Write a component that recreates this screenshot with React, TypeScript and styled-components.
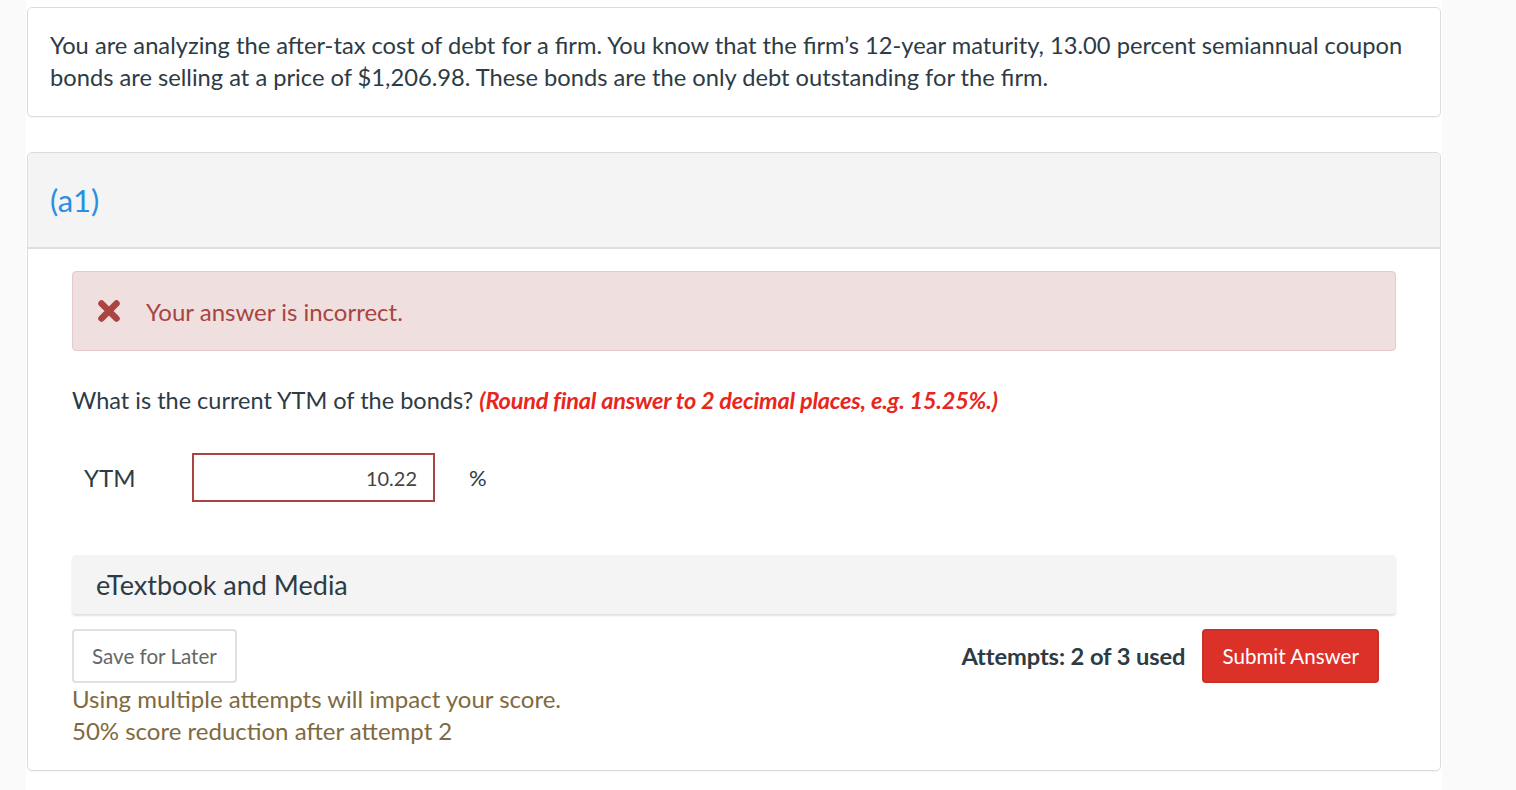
import React from "react";
import styled, { createGlobalStyle } from "styled-components";

const Global = createGlobalStyle`
  html, body { margin: 0; padding: 0; }
  body {
    background: #fafafa;
    font-family: Lato, "Noto Sans", sans-serif;
    color: #2d3b45;
  }
  * { box-sizing: border-box; }
`;

const Column = styled.main`
  margin-left: 26px;
  width: 1416px;
  min-height: 790px;
  background: #ffffff;
  padding: 7px 1px 19px 1px;
  display: flex;
  flex-direction: column;
  gap: 35px;
`;

const Card = styled.section`
  border: 1px solid #dcdcdc;
  border-radius: 5px;
  background: #fff;
  box-shadow: 0 1px 1px rgba(0, 0, 0, 0.04);
`;

const Stem = styled.p`
  margin: 0;
  padding: 21px 22px 23px 22px;
  font-size: 23.7px;
  line-height: 32px;
  color: #2d3b45;
`;

const PartHeader = styled.header`
  height: 96px;
  background: #f4f4f4;
  border-bottom: 2px solid #dedede;
  border-radius: 5px 5px 0 0;
  display: flex;
  align-items: center;
  padding: 0 22px;
  font-size: 31px;
  color: #2b8ee0;
`;

const PartBody = styled.div`
  padding: 22px 44px 23px 44px;
  display: flex;
  flex-direction: column;
`;

const Alert = styled.div`
  height: 80px;
  background: #efdfdf;
  border: 1px solid #e5c9cb;
  border-radius: 4px;
  display: flex;
  align-items: center;
  gap: 25px;
  padding: 0 24px;
  color: #a94442;
  font-size: 24px;
`;

const Prompt = styled.p`
  margin: 33px 0 0 0;
  font-size: 23.5px;
  line-height: 32px;
  color: #2d3b45;
`;

const Hint = styled.em`
  font-weight: 700;
  font-style: italic;
  color: #e8261d;
  letter-spacing: -0.2px;
`;

const AnswerRow = styled.div`
  margin-top: 37px;
  display: flex;
  align-items: center;
  padding-left: 12px;
`;

const Label = styled.span`
  width: 108px;
  font-size: 24px;
  color: #2d3b45;
`;

const Input = styled.div`
  width: 243px;
  height: 49px;
  border: 2px solid #a94442;
  display: flex;
  align-items: center;
  justify-content: flex-end;
  padding-right: 16px;
  font-size: 20px;
  color: #444;
`;

const Unit = styled.span`
  margin-left: 34px;
  font-size: 22px;
  color: #2d3b45;
`;

const MediaBar = styled.div`
  margin-top: 53px;
  height: 59px;
  background: #f4f4f4;
  border-radius: 4px;
  box-shadow: 0 2px 2px rgba(0, 0, 0, 0.12);
  display: flex;
  align-items: center;
  padding: 0 24px;
  font-size: 27px;
  color: #2d3b45;
`;

const Footer = styled.div`
  margin-top: 15px;
  display: flex;
  justify-content: space-between;
  align-items: flex-start;
  padding-right: 17px;
`;

const LeftCol = styled.div`
  display: flex;
  flex-direction: column;
  align-items: flex-start;
`;

const Button = styled.button<{ $primary?: boolean }>`
  height: 54px;
  padding: 0 18px;
  border-radius: 4px;
  font-family: Lato, "Noto Sans", sans-serif;
  font-size: 20.6px;
  cursor: pointer;
  border: 2px solid ${(p) => (p.$primary ? "#c9302a" : "#e0e0e0")};
  background: ${(p) => (p.$primary ? "#dc3129" : "#fff")};
  color: ${(p) => (p.$primary ? "#fff" : "#666")};
`;

const Notice = styled.p`
  margin: 0;
  font-size: 24px;
  line-height: 32px;
  color: #7f6a40;
`;

const RightGroup = styled.div`
  display: flex;
  align-items: center;
  gap: 17px;
`;

const Attempts = styled.span`
  font-size: 23.7px;
  font-weight: 700;
  letter-spacing: -0.1px;
  color: #2d3b45;
`;

const XIcon = () => (
  <svg width="24" height="24" viewBox="0 0 24 24" aria-hidden="true">
    <path
      d="M4.5 4.5 L19.5 19.5 M19.5 4.5 L4.5 19.5"
      stroke="#a94442"
      strokeWidth="6.5"
      strokeLinecap="round"
      fill="none"
    />
  </svg>
);

export default function App() {
  return (
    <>
      <Global />
      <Column>
        <Card>
          <Stem>
            You are analyzing the after-tax cost of debt for a firm. You know that the firm’s 12-year
            maturity, 13.00 percent semiannual coupon bonds are selling at a price of $1,206.98. These
            bonds are the only debt outstanding for the firm.
          </Stem>
        </Card>
        <Card>
          <PartHeader>(a1)</PartHeader>
          <PartBody>
            <Alert>
              <XIcon />
              <span>Your answer is incorrect.</span>
            </Alert>
            <Prompt>
              What is the current YTM of the bonds?{" "}
              <Hint>(Round final answer to 2 decimal places, e.g. 15.25%.)</Hint>
            </Prompt>
            <AnswerRow>
              <Label>YTM</Label>
              <Input>10.22</Input>
              <Unit>%</Unit>
            </AnswerRow>
            <MediaBar>eTextbook and Media</MediaBar>
            <Footer>
              <LeftCol>
                <Button>Save for Later</Button>
                <Notice>
                  Using multiple attempts will impact your score.
                  <br />
                  50% score reduction after attempt 2
                </Notice>
              </LeftCol>
              <RightGroup>
                <Attempts>Attempts: 2 of 3 used</Attempts>
                <Button $primary>Submit Answer</Button>
              </RightGroup>
            </Footer>
          </PartBody>
        </Card>
      </Column>
    </>
  );
}
